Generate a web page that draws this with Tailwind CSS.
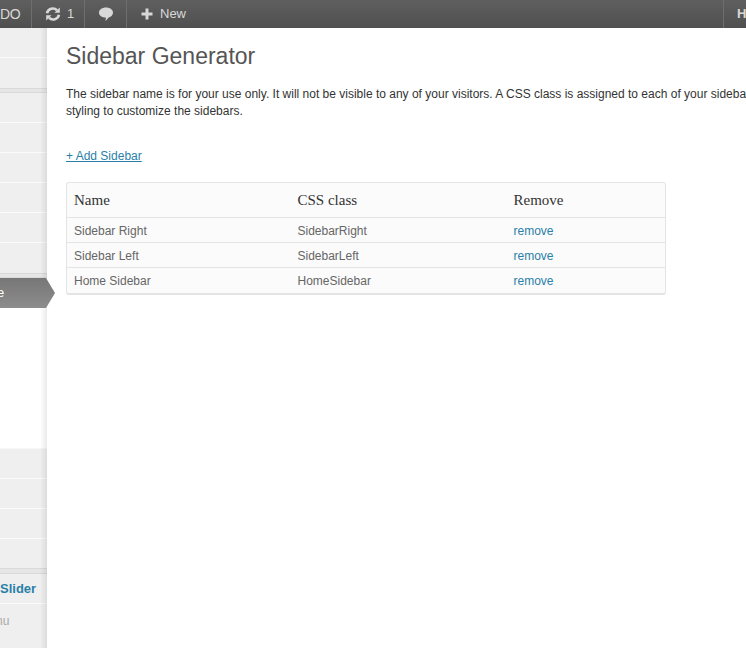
<!DOCTYPE html>
<html>
<head>
<meta charset="utf-8">
<script src="https://cdn.jsdelivr.net/npm/@tailwindcss/browser@4"></script>
</head>
<body class="w-[746px] h-[648px] overflow-hidden bg-white font-['Liberation_Sans',sans-serif] text-[#333]">
<header class="h-[28px] flex justify-between bg-gradient-to-b from-[#5f5f5f] to-[#4f4f4f] text-[#d8d8d8] text-[13px] font-bold overflow-hidden">
  <div class="flex">
    <div class="w-[32px] border-r border-[#6e6e6e] flex items-center font-normal text-[14px] tracking-[-0.3px]"><span>DO</span></div>
    <div class="w-[53px] border-r border-[#6e6e6e] flex items-center pl-[13px] gap-[6px]">
      <svg width="16" height="16" viewBox="0 0 16 16" fill="none" stroke="#d8d8d8" stroke-width="2.600"><path d="M2 7.200a6 6 0 0 1 10-3"/><path d="M14 8.800a6 6 0 0 1-10 3"/><path d="M14.800 1.500v5.300H9.500z" fill="#d8d8d8" stroke="none"/><path d="M1.200 14.500V9.200h5.300z" fill="#d8d8d8" stroke="none"/></svg>
      <span class="font-normal">1</span>
    </div>
    <div class="w-[42px] border-r border-[#6e6e6e] flex items-center pl-[13px]">
      <svg width="16" height="16" viewBox="0 0 16 16"><path d="M8 1.500c4 0 7 2.200 7 5.200 0 2.300-1.800 4-4.300 4.700L7.500 15l.4-3.400C4 11.500 1 9.600 1 6.700 1 3.700 4 1.500 8 1.500z" fill="#d8d8d8"/></svg>
    </div>
    <div class="flex items-center pl-[14px] gap-[7px]">
      <svg width="12" height="12" viewBox="0 0 12 12"><path d="M4.500 0.500h3v4h4v3h-4v4h-3v-4h-4v-3h4z" fill="#d8d8d8"/></svg>
      <span class="font-normal text-[13px]">New</span>
    </div>
  </div>
  <div class="w-[23px] border-l border-[#6e6e6e] flex items-center pl-[13px]"><span class="font-bold">H</span></div>
</header>
<div class="flex h-[620px]">
  <aside class="relative w-[47px] shrink-0 flex flex-col bg-[#efefef]">
    <div class="h-[30px] border-b border-[#fafafa]"></div>
    <div class="h-[30px]"></div>
    <div class="h-[5px] border-y border-[#d9d9d9] bg-[#e6e6e6]"></div>
    <div class="h-[30px] border-b border-[#fafafa]"></div>
    <div class="h-[30px] border-b border-[#fafafa]"></div>
    <div class="h-[30px] border-b border-[#fafafa]"></div>
    <div class="h-[30px] border-b border-[#fafafa]"></div>
    <div class="h-[30px] border-b border-[#fafafa]"></div>
    <div class="h-[30px]"></div>
    <div class="h-[5px] border-y border-[#d9d9d9] bg-[#e6e6e6]"></div>
    <div class="relative z-10 h-[30px] w-[46px] bg-gradient-to-b from-[#777] to-[#8c8c8c] flex items-center text-white text-[13px]">
      <span class="-ml-[3px]">e</span>
      <svg class="absolute left-[46px] top-0" width="9" height="30" viewBox="0 0 9 30"><defs><linearGradient id="g" x1="0" y1="0" x2="0" y2="1"><stop offset="0" stop-color="#777"/><stop offset="1" stop-color="#8c8c8c"/></linearGradient></defs><path d="M0 0l9 15L0 30z" fill="url(#g)"/></svg>
    </div>
    <div class="h-[141px] bg-white border-b border-[#f7f7f7]"></div>
    <div class="h-[30px] border-b border-[#fafafa]"></div>
    <div class="h-[30px] border-b border-[#fafafa]"></div>
    <div class="h-[30px] border-b border-[#fafafa]"></div>
    <div class="h-[29px]"></div>
    <div class="h-[6px] border-y border-[#d9d9d9] bg-[#e6e6e6]"></div>
    <div class="h-[30px] border-b border-[#fafafa] flex items-center text-[#2a7fa8] text-[13px] font-bold"><span>Slider</span></div>
    <div class="h-[34px] flex items-center text-[#aaa] text-[12px]"><span class="-ml-[4px]">nu</span></div>
    <div class="absolute inset-y-0 right-0 w-[7px] bg-gradient-to-r from-transparent to-black/8 pointer-events-none"></div>
  </aside>
  <main class="flex-1 min-w-0 pl-[19px] overflow-hidden">
    <h1 class="text-[23px] leading-[30px] pt-[13px] text-[#555]">Sidebar Generator</h1>
    <p class="mt-[15px] text-[12px] leading-[17px] whitespace-nowrap text-[#333]">The sidebar name is for your use only. It will not be visible to any of your visitors. A CSS class is assigned to each of your sideba<br>styling to customize the sidebars.</p>
    <a class="block mt-[27px] text-[12px] leading-[18px] text-[#2a7fa8] underline w-fit">+ Add Sidebar</a>
    <div class="mt-[17px] w-[600px] border border-[#e4e4e4] border-b-2 rounded-[3px] bg-[#fbfbfb] text-[12px] text-[#666]">
      <div class="grid grid-cols-[223.500px_216px_1fr] h-[35px] items-center pl-[7px] border-b border-[#e4e4e4] font-['Liberation_Serif',serif] text-[15px] text-[#333]">
        <div>Name</div><div>CSS class</div><div>Remove</div>
      </div>
      <div class="grid grid-cols-[223.500px_216px_1fr] h-[25px] items-center pl-[7px] pt-[1px] border-b border-[#e4e4e4]">
        <div>Sidebar Right</div><div>SidebarRight</div><div class="text-[#2a7fa8]">remove</div>
      </div>
      <div class="grid grid-cols-[223.500px_216px_1fr] h-[25px] items-center pl-[7px] pt-[1px] border-b border-[#e4e4e4]">
        <div>Sidebar Left</div><div>SidebarLeft</div><div class="text-[#2a7fa8]">remove</div>
      </div>
      <div class="grid grid-cols-[223.500px_216px_1fr] h-[25px] items-center pl-[7px]">
        <div>Home Sidebar</div><div>HomeSidebar</div><div class="text-[#2a7fa8]">remove</div>
      </div>
    </div>
  </main>
</div>
</body>
</html>
